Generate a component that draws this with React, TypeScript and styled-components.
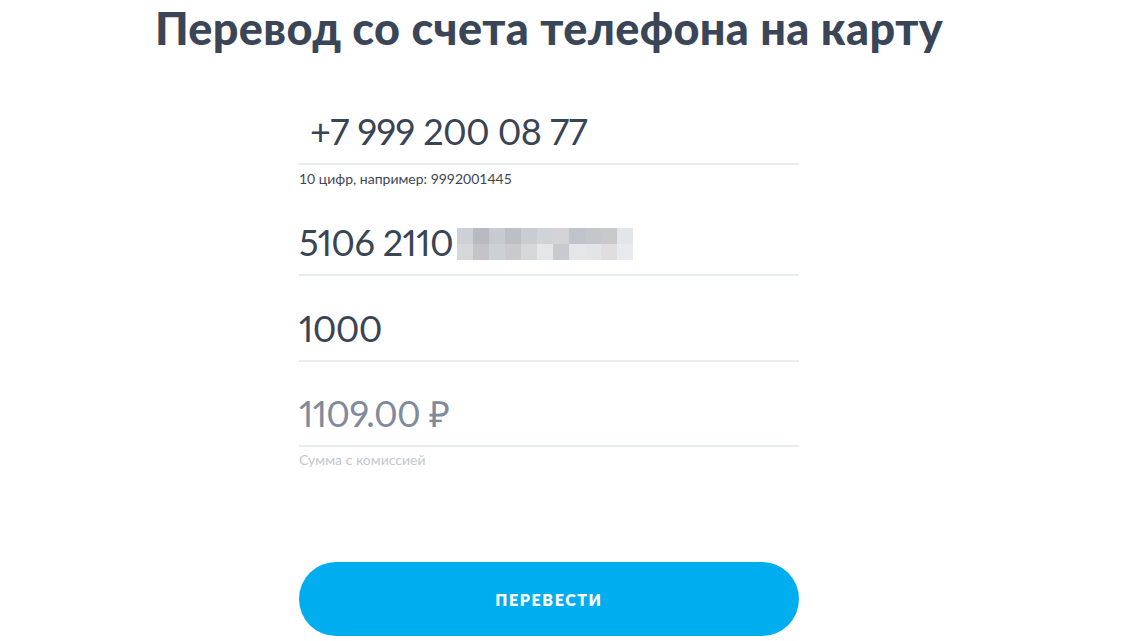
import React from 'react';
import styled, { createGlobalStyle } from 'styled-components';

const GlobalStyle = createGlobalStyle`
  html, body {
    margin: 0;
    padding: 0;
    background: #ffffff;
  }
  body {
    font-family: Lato, "Open Sans", sans-serif;
    -webkit-font-smoothing: antialiased;
  }
`;

const Page = styled.div`
  width: 1140px;
  box-sizing: border-box;
  padding-right: 42px;
  display: flex;
  flex-direction: column;
  align-items: center;
`;

const Title = styled.h1`
  margin: 2px 0 0;
  font-family: Lato, "Open Sans", sans-serif;
  font-weight: 900;
  font-size: 45px;
  line-height: 52px;
  color: #3a4657;
  letter-spacing: 0.35px;
  white-space: nowrap;
`;

const Form = styled.form`
  width: 500px;
  margin-top: 57px;
  display: flex;
  flex-direction: column;
`;

interface FieldProps {
  gap: number;
}

const Field = styled.div<FieldProps>`
  margin-top: ${(p) => p.gap}px;
  display: flex;
  flex-direction: column;
`;

interface ValueProps {
  muted?: boolean;
  indent?: number;
}

const Value = styled.div<ValueProps>`
  height: 40px;
  padding: 0 0 12px ${(p) => p.indent || 0}px;
  border-bottom: 2px solid #e8ecf0;
  display: flex;
  align-items: center;
  font-size: 36px;
  line-height: 40px;
  letter-spacing: -0.6px;
  font-variant-numeric: proportional-nums;
  color: ${(p) => (p.muted ? '#7f8b9b' : '#394454')};
  white-space: pre;
`;

interface HintProps {
  light?: boolean;
}

const Hint = styled.div<HintProps>`
  margin-top: ${(p) => (p.light ? 4 : 5)}px;
  font-size: 14px;
  line-height: 18px;
  color: ${(p) => (p.light ? '#c1c7cf' : '#3d4654')};
`;

const Pixelated = styled.div`
  display: grid;
  grid-template-columns: repeat(11, 16px);
  grid-auto-rows: 16px;
  margin-left: 4px;
  margin-top: 4px;
`;

interface PixelProps {
  tone: string;
}

const Pixel = styled.span<PixelProps>`
  background: ${(p) => p.tone};
`;

const SubmitButton = styled.button`
  margin-top: 93px;
  height: 74px;
  width: 100%;
  border: none;
  border-radius: 37px;
  background: #00aeef;
  color: #ffffff;
  font-family: Lato, "Open Sans", sans-serif;
  font-weight: 800;
  font-size: 16px;
  letter-spacing: 1.6px;
  cursor: pointer;
`;

const blurTones = [
  '#cdd0d4', '#b7bbc0', '#c6cbcf', '#bcbfc4', '#c9ccd1', '#d0d3d7', '#d4d4d6', '#bec3cc', '#c5c6cb', '#c8c8ca', '#e2e5ea',
  '#d6d7da', '#c4c3c8', '#cbd1d5', '#cacacc', '#d5d7db', '#e5e6ea', '#c8cacf', '#e5e6e9', '#e3e4e8', '#dfdddf', '#e8eaef',
];

export default function App() {
  return (
    <>
      <GlobalStyle />
      <Page>
        <Title>Перевод со счета телефона на карту</Title>
        <Form onSubmit={(e) => e.preventDefault()}>
          <Field gap={0}>
            <Value indent={11}>+7 999 200 08 77</Value>
            <Hint>10 цифр, например: 9992001445</Hint>
          </Field>
          <Field gap={34}>
            <Value>
              5106 2110
              <Pixelated>
                {blurTones.map((tone, i) => (
                  <Pixel key={i} tone={tone} />
                ))}
              </Pixelated>
            </Value>
          </Field>
          <Field gap={32}>
            <Value>1000</Value>
          </Field>
          <Field gap={31}>
            <Value muted>1109.00 ₽</Value>
            <Hint light>Сумма с комиссией</Hint>
          </Field>
          <SubmitButton type="submit">ПЕРЕВЕСТИ</SubmitButton>
        </Form>
      </Page>
    </>
  );
}
